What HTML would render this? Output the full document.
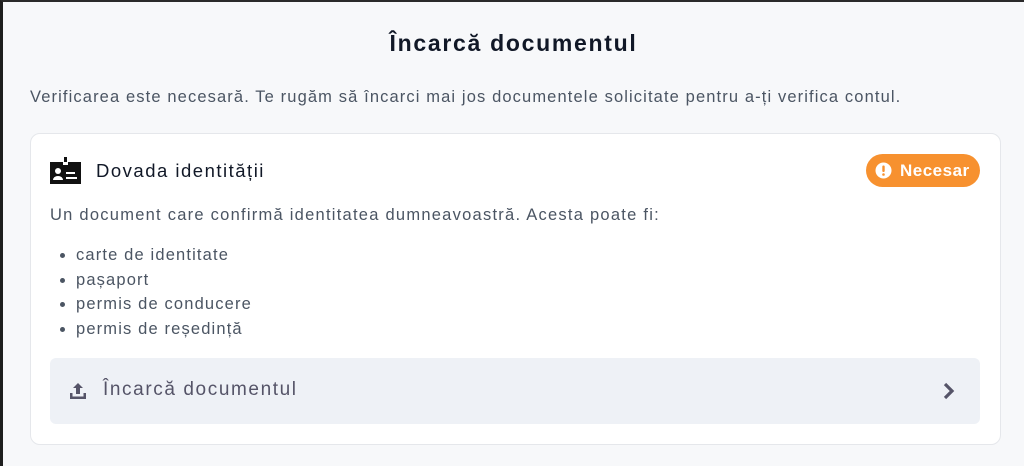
<!DOCTYPE html>
<html><head><meta charset="utf-8"><style>
*{margin:0;padding:0;box-sizing:border-box}
body{width:1024px;height:466px;background:#f7f8fa;font-family:"Liberation Sans",sans-serif;position:relative;overflow:hidden;border-top:2px solid #2a2a2a;border-left:3px solid #1e1e1e}
.t{position:absolute;left:0;width:1021px;text-align:center;top:28px;font-size:23px;font-weight:bold;color:#111827;letter-spacing:1.7px}
.s{position:absolute;left:27px;top:86px;font-size:16.5px;color:#4b5563;letter-spacing:1.12px;white-space:nowrap}
.card{position:absolute;left:27px;top:131px;width:971px;height:312px;background:#fff;border:1px solid #e5e7eb;border-radius:10px}
.h{position:absolute;left:93px;top:158px;font-size:18.5px;color:#111827;letter-spacing:1.5px}
.badge{position:absolute;left:863px;top:152px;width:114px;height:33px;border-radius:17px;background:#f7912f;color:#fff;font-size:17px;font-weight:bold;letter-spacing:0.5px}
.d{position:absolute;left:47px;top:204px;font-size:16.5px;color:#4b5563;letter-spacing:1.25px;white-space:nowrap}
ul{position:absolute;left:73px;top:241px;font-size:16.5px;color:#4b5563;line-height:24.7px;letter-spacing:1.15px}
li{list-style:disc}
.btn{position:absolute;left:47px;top:356px;width:930px;height:66px;background:#eef1f6;border-radius:6px}
.bt{position:absolute;left:53px;top:21px;font-size:19px;color:#555468;letter-spacing:1.6px}
</style></head><body>
<div class="t">Încarcă documentul</div>
<div class="s">Verificarea este necesară. Te rugăm să încarci mai jos documentele solicitate pentru a-ți verifica contul.</div>
<div class="card"></div>
<svg style="position:absolute;left:47px;top:155px" width="32" height="28" viewBox="0 0 32 28"><rect x="0" y="5" width="31" height="22" fill="#111"/><rect x="14" y="0" width="3" height="8" fill="#111"/><rect x="13" y="5" width="5" height="3" fill="#fff"/><circle cx="8" cy="14" r="3" fill="#fff"/><path d="M3 23a5 4 0 0 1 10 0z" fill="#fff"/><rect x="16" y="15" width="9" height="2" fill="#fff"/><rect x="16" y="20" width="11" height="2" fill="#fff"/></svg>
<div class="h">Dovada identității</div>
<div class="badge"><svg style="position:absolute;left:9px;top:8px" width="17" height="17" viewBox="0 0 17 17"><circle cx="8.5" cy="8.5" r="8" fill="#fff"/><rect x="7.3" y="3.5" width="2.4" height="6.5" rx="1" fill="#f7912f"/><circle cx="8.5" cy="12.5" r="1.3" fill="#f7912f"/></svg><span style="position:absolute;left:34px;top:7px">Necesar</span></div>
<div class="d">Un document care confirmă identitatea dumneavoastră. Acesta poate fi:</div>
<ul><li>carte de identitate</li><li>pașaport</li><li>permis de conducere</li><li>permis de reședință</li></ul>
<div class="btn"><svg style="position:absolute;left:19px;top:24px" width="18" height="18" viewBox="0 0 18 18" fill="#555468"><path d="M9 1l5 5h-3v6H7V6H4z"/><path d="M1 11h2.5v3.5h11V11H17v6H1z"/></svg><div class="bt">Încarcă documentul</div><svg style="position:absolute;left:893px;top:24px" width="12" height="18" viewBox="0 0 12 18"><path d="M2 2l7 7-7 7" stroke="#555468" stroke-width="3.2" fill="none"/></svg></div>
</body></html>
